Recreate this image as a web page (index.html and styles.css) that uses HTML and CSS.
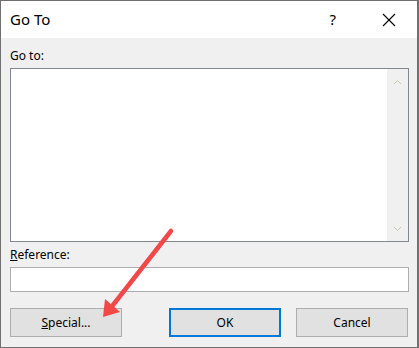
FILE: index.html
```html
<!DOCTYPE html>
<html>
<head>
    <title>Go To</title>
    <link rel="stylesheet" href="styles.css">
</head>
<body>
    <div class="window">
        <div class="titlebar">
            <span class="title">Go To</span>
            <span class="help">?</span>
            <svg class="close" width="14" height="14" viewBox="0 0 14 14">
                <path d="M1 1 L13 13 M13 1 L1 13" stroke="#000" stroke-width="1.1" fill="none"/>
            </svg>
        </div>

        <div class="content">
            <div class="label">Go to:</div>
            <div class="listbox">
                <div class="list-area"></div>
                <div class="scrollbar">
                    <svg width="9" height="6" viewBox="0 0 9 6"><path d="M1 5 L4.5 1.5 L8 5" stroke="#c9c3b0" fill="none"/></svg>
                    <svg width="9" height="6" viewBox="0 0 9 6"><path d="M1 1 L4.5 4.5 L8 1" stroke="#c9c3b0" fill="none"/></svg>
                </div>
            </div>

            <div class="label label-ref"><u>R</u>eference:</div>
            <div class="textbox"></div>

            <div class="buttons">
                <button class="btn"><u>S</u>pecial...</button>
                <button class="btn btn-default">OK</button>
                <button class="btn">Cancel</button>
            </div>
        </div>

        <!-- annotation arrow -->
        <svg class="pointer" width="419" height="348" viewBox="0 0 419 348">
            <line x1="171" y1="231" x2="113" y2="305" stroke="#f24848" stroke-width="4.5" stroke-linecap="round"/>
            <polygon points="103,317 105,299 120,312" fill="#f24848"/>
        </svg>
    </div>
</body>
</html>
```

FILE: styles.css
```css
body {
    margin: 0;
    font-family: "Noto Sans", "Open Sans", sans-serif;
    color: #000;
}
.window {
    position: relative;
    width: 419px;
    height: 348px;
    box-sizing: border-box;
    border: 1px solid #707070;
    border-right-width: 2px;
    background: #f0f0f0;
    display: flex;
    flex-direction: column;
}
.titlebar {
    height: 37px;
    background: #fff;
    display: flex;
    align-items: center;
    padding-left: 9px;
}
.title {
    font-size: 15px;
    flex: 1;
    margin-top: -1px;
}
.help {
    font-size: 15px;
    margin-right: 46px;
    margin-top: -1px;
}
.close {
    margin-right: 21px;
}
.content {
    flex: 1;
    padding: 9px 8px 0 9px;
    font-size: 12px;
}
.label {
    line-height: 16px;
    height: 16px;
    margin-top: 1px;
}
.listbox {
    margin-top: 4px;
    height: 174px;
    box-sizing: border-box;
    border: 1px solid #828790;
    display: flex;
    background: #fff;
}
.list-area {
    flex: 1;
}
.scrollbar {
    width: 21px;
    background: #f0f0f0;
    display: flex;
    flex-direction: column;
    justify-content: space-between;
    align-items: center;
    padding: 10px 0 9px;
}
.label-ref {
    margin-top: 5px;
}
.textbox {
    margin-top: 4px;
    height: 25px;
    box-sizing: border-box;
    border: 1px solid #adadad;
    background: #fff;
}
.buttons {
    margin-top: 16px;
    display: flex;
}
.btn {
    font-family: inherit;
    font-size: 12px;
    width: 112px;
    height: 29px;
    box-sizing: border-box;
    background: #e1e1e1;
    border: 1px solid #adadad;
    padding: 0;
    color: #000;
}
.btn-default {
    border: 2px solid #0078d7;
    margin-left: 47px;
    margin-right: 15px;
}
.pointer {
    position: absolute;
    left: -1px;
    top: -1px;
    pointer-events: none;
}
```
